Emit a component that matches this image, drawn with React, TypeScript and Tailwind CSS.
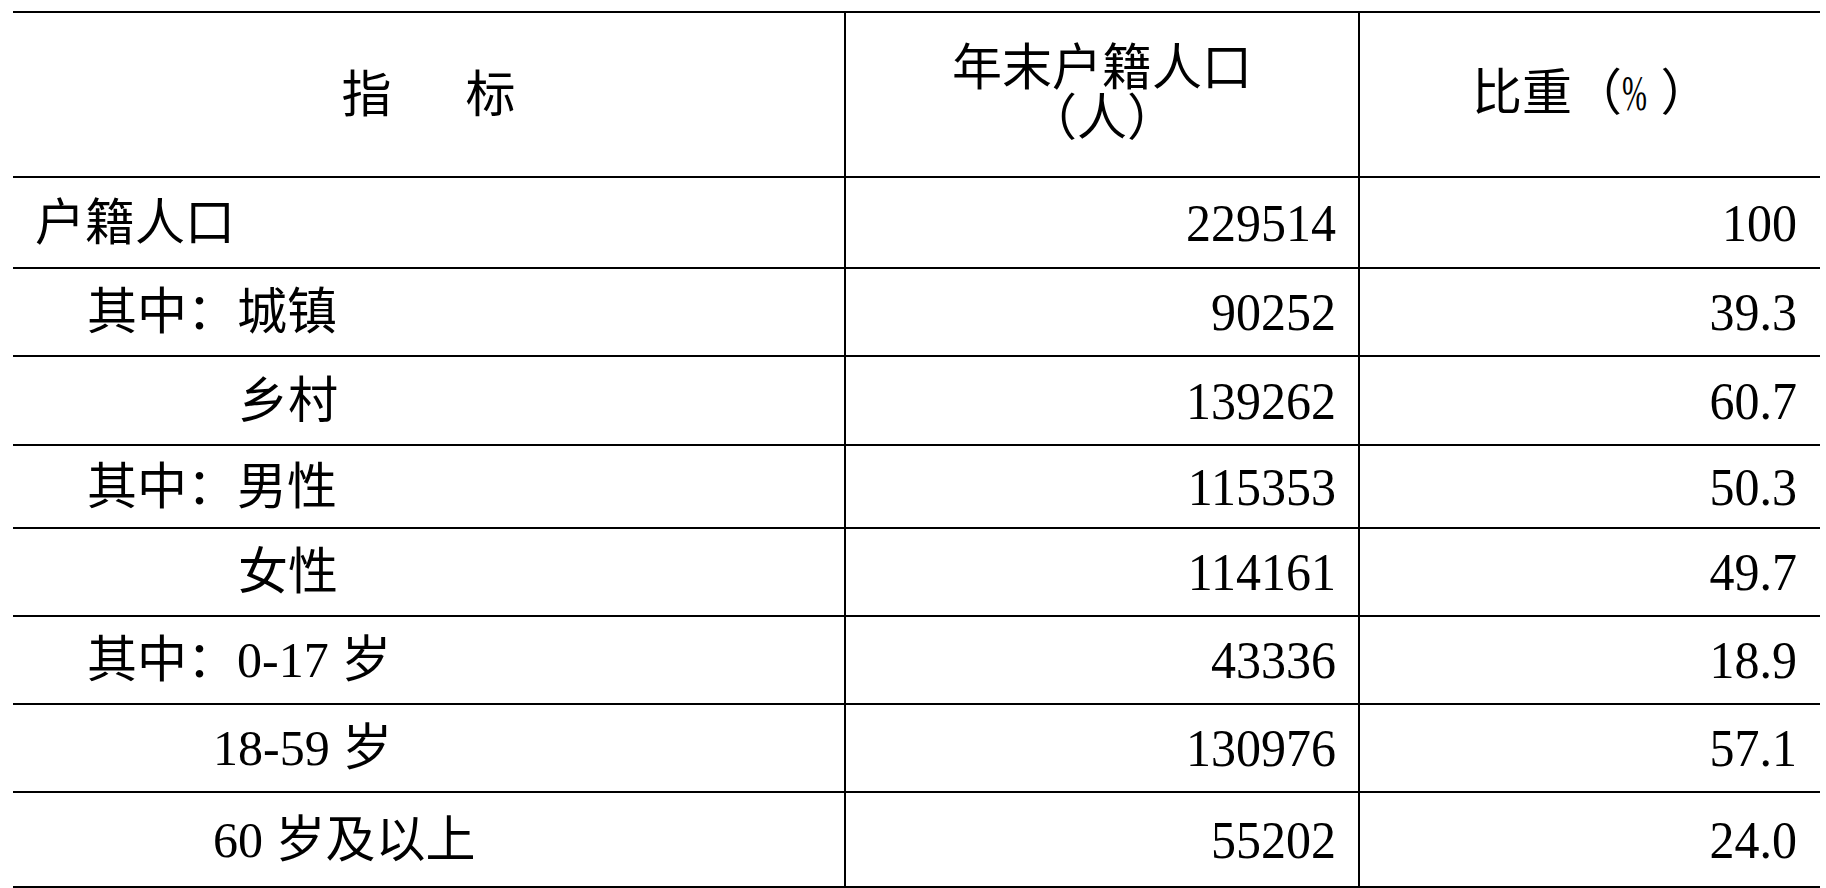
const rows = [
  { label: "户籍人口", pad: "pl-[22px]", h: "h-[91px]", total: "229514", share: "100" },
  { label: "其中：城镇", pad: "pl-[74px]", h: "h-[88px]", total: "90252", share: "39.3" },
  { label: "乡村", pad: "pl-[225px]", h: "h-[89px]", total: "139262", share: "60.7" },
  { label: "其中：男性", pad: "pl-[74px]", h: "h-[83px]", total: "115353", share: "50.3" },
  { label: "女性", pad: "pl-[225px]", h: "h-[88px]", total: "114161", share: "49.7" },
  { label: "其中：0-17 岁", pad: "pl-[74px]", h: "h-[88px]", total: "43336", share: "18.9" },
  { label: "18-59 岁", pad: "pl-[200px]", h: "h-[88px]", total: "130976", share: "57.1" },
  { label: "60 岁及以上", pad: "pl-[200px]", h: "h-[95px]", total: "55202", share: "24.0" },
];

export default function App() {
  return (
    <div className="min-h-screen bg-white pt-[11px] pl-[13px] text-black font-['Liberation_Serif','Noto_Sans_CJK_SC',serif] text-[50px] leading-none">
      <div className="w-[1807px] border-t-2 border-black">
        <div className="grid grid-cols-[833px_514px_460px] h-[165px] border-b-2 border-black">
          <div className="flex items-center justify-center gap-[74px] border-r-2 border-black">
            <span>指</span>
            <span>标</span>
          </div>
          <div className="flex flex-col items-center justify-center border-r-2 border-black leading-[50px] pb-[4px]">
            <span>年末户籍人口</span>
            <span>（人）</span>
          </div>
          <div className="flex items-center pl-[112px] pb-[4px]">
            <span>比重（<span className="inline-block scale-x-[0.6] origin-left w-[26px]">%</span> ）</span>
          </div>
        </div>
        {rows.map((r) => (
          <div
            key={r.label}
            className={`grid grid-cols-[833px_514px_460px] border-b-2 border-black ${r.h}`}
          >
            <div className={`flex items-center border-r-2 border-black ${r.pad}`}>
              {r.label}
            </div>
            <div className="flex items-center justify-end border-r-2 border-black pr-[22px]">
              <span className="inline-block scale-y-[1.06]">{r.total}</span>
            </div>
            <div className="flex items-center justify-end pr-[23px]">
              <span className="inline-block scale-y-[1.06]">{r.share}</span>
            </div>
          </div>
        ))}
      </div>
    </div>
  );
}
